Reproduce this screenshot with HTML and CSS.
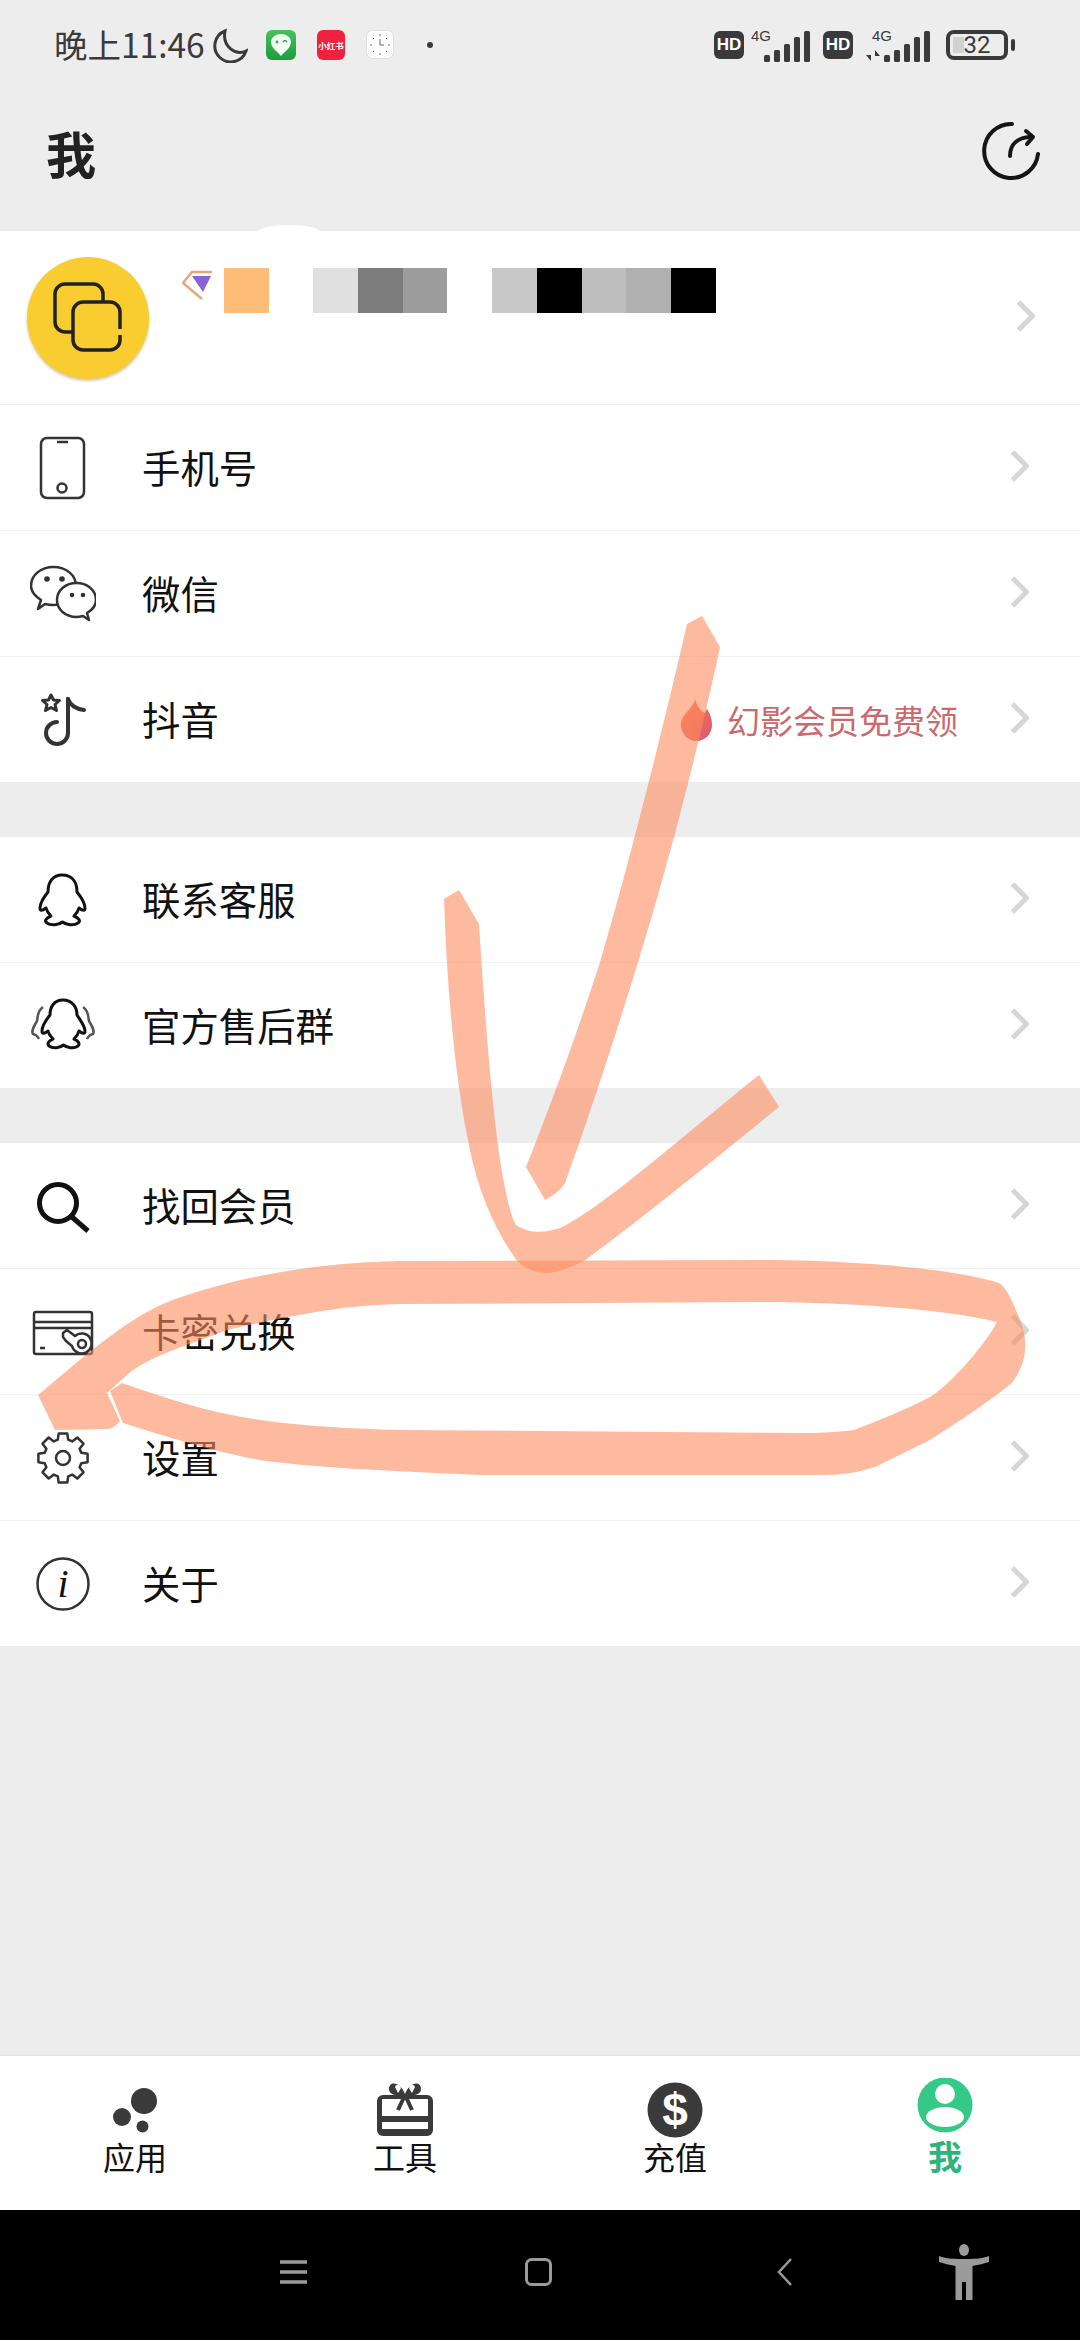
FILE: index.html
```html
<!DOCTYPE html>
<html lang="zh-CN">
<head>
  <meta charset="UTF-8" />
  <title>我</title>
  <link rel="stylesheet" href="styles.css">
</head>
<body>
  <svg class="defs" width="0" height="0">
    <symbol id="chev" viewBox="0 0 19 32"><path d="M2.5 2 L16.5 16 L2.5 30" /></symbol>
    <linearGradient id="flame" x1="0" y1="0" x2="1" y2="1">
      <stop offset="0" stop-color="#ff7a4c" />
      <stop offset="1" stop-color="#d8596f" />
    </linearGradient>
    <linearGradient id="wx" x1="0" y1="0" x2="0" y2="1">
      <stop offset="0" stop-color="#46c15a" />
      <stop offset="1" stop-color="#1f9c3c" />
    </linearGradient>
  </svg>

  <div class="screen">
    <header class="top">
      <div class="statusbar">
        <div class="status-left">
          <span class="time">晚上11:46</span>
          <svg class="moon" width="35" height="35" viewBox="0 0 35 35"><path d="M12 3 A16 16 0 1 0 33 23 C23 28 9 19 12 3Z" /></svg>
          <div class="app-icons">
            <svg width="30" height="30" viewBox="0 0 30 30"><rect width="30" height="30" rx="6" fill="url(#wx)" /><path d="M15 26 C11 21 5 18 5 12 C5 7 10 4 15 4 C20 4 25 7 25 12 C25 18 19 21 15 26Z" fill="#f0fff2" /><circle cx="11" cy="12" r="1.4" fill="#2fa648" /><path d="M17 12 q2 -3 4 0" class="wink" /></svg>
            <svg width="28" height="30" viewBox="0 0 28 30"><rect width="28" height="30" rx="6" fill="#f0213f" /><text x="14" y="18.5" class="xhs">小红书</text></svg>
            <svg class="clock" width="28" height="30" viewBox="0 0 28 30"><rect x="0.5" y="0.5" width="27" height="28" rx="6" fill="#fff" stroke="#ddd" /><path d="M14 4 v2 M14 23 v2 M4 15 h2 M22 15 h2 M7 8 l1 1 M21 8 l-1 1 M7 22 l1 -1 M21 22 l-1 -1" /><path d="M14 9 v6 h4" /></svg>
            <span class="dot"></span>
          </div>
        </div>
        <div class="status-right">
          <span class="hd">HD</span>
          <svg class="signal" width="60" height="33" viewBox="0 0 60 33">
            <text x="0" y="12">4G</text>
            <rect x="13" y="26" width="6" height="7" rx="1.5" /><rect x="23" y="21" width="6" height="12" rx="1.5" /><rect x="33" y="15" width="6" height="18" rx="1.5" /><rect x="43" y="8" width="6" height="25" rx="1.5" /><rect x="53" y="2" width="6" height="31" rx="1.5" />
          </svg>
          <span class="hd">HD</span>
          <svg class="signal" width="66" height="33" viewBox="0 0 66 33">
            <text x="7" y="12">4G</text>
            <path d="M6 21 v11 l-5 -6 h5Z M10 32 v-11 l5 6 h-5Z" />
            <rect x="19" y="26" width="6" height="7" rx="1.5" /><rect x="29" y="21" width="6" height="12" rx="1.5" /><rect x="39" y="15" width="6" height="18" rx="1.5" /><rect x="49" y="8" width="6" height="25" rx="1.5" /><rect x="59" y="2" width="6" height="31" rx="1.5" />
          </svg>
          <span class="battery">32</span>
        </div>
      </div>
      <div class="title-bar">
        <h1>我</h1>
        <svg class="refresh" width="58" height="58" viewBox="0 0 58 58"><path d="M30 2 A27 27 0 1 0 56 32" /><path d="M28 34 C28 22 36 15 50 15" /><path d="M44 9 L51 15 L45 22" /></svg>
      </div>
    </header>

    <section class="group">
      <div class="row user-card">
        <div class="avatar">
          <svg width="122" height="122" viewBox="0 0 122 122"><path d="M76 44 V37 a10 10 0 0 0 -10 -10 H38 a10 10 0 0 0 -10 10 V65 a10 10 0 0 0 10 10 H45" /><path d="M93 72 V55 a10 10 0 0 0 -10 -10 H56 a10 10 0 0 0 -10 10 V83 a10 10 0 0 0 10 10 H83 a10 10 0 0 0 10 -10 V78" /></svg>
        </div>
        <div class="user-name">
          <svg class="gem" width="30" height="30" viewBox="0 0 30 30"><path d="M30 2 H10 L1 13 L20 29" class="gem-edge" /><path d="M10 6 H29 L21 22Z" fill="#8a63d2" /></svg>
          <div class="mosaic">
            <i class="c1"></i><i></i><i class="c2"></i><i class="c3"></i><i class="c4"></i><i></i><i class="c5"></i><i class="c6"></i><i class="c7"></i><i class="c8"></i><i class="c6"></i>
          </div>
        </div>
        <svg class="chevron"><use href="#chev" /></svg>
      </div>

      <div class="row">
        <svg class="icon thin" viewBox="0 0 66 66"><rect x="11" y="3" width="43" height="60" rx="6" /><path d="M27 7 H38" /><circle cx="32" cy="53" r="4.5" /></svg>
        <span class="label">手机号</span>
        <svg class="chevron"><use href="#chev" /></svg>
      </div>
      <div class="row">
        <svg class="icon thin" viewBox="0 0 66 66">
          <path d="M8 48 L11 39 C5 35 1 31 1 25 C1 14 11 6 23.5 6 C36 6 46 14 46 25 C46 36 36 44 23.5 44 C20 44 17 43.5 15 43Z" />
          <path d="M59 59 L57 52 C62 49 66 45 66 39 C66 29 57 22 46.5 22 C36 22 27 29 27 39 C27 49 36 56 46.5 56 C49 56 51 55.5 53 55Z" class="paper" />
          <circle cx="17" cy="18" r="2.8" class="solid" /><circle cx="32" cy="18" r="2.8" class="solid" /><circle cx="42" cy="34" r="2.3" class="solid" /><circle cx="53" cy="34" r="2.3" class="solid" />
        </svg>
        <span class="label">微信</span>
        <svg class="chevron"><use href="#chev" /></svg>
      </div>
      <div class="row">
        <svg class="icon tiktok" viewBox="0 0 66 66"><path d="M38 12 V46 a11 11 0 1 1 -11 -11" /><path d="M38 12 q3 9 16 11" /><path class="star" d="M21 8 l2.5 5 l6 .5 l-4.5 4 l1.5 6 l-5.5 -3 l-5.5 3 l1.5 -6 l-4.5 -4 l6 -.5Z" /></svg>
        <span class="label">抖音</span>
        <div class="promo">
          <svg width="31" height="42" viewBox="0 0 31 42"><path d="M14 0 C16 8 21 13 24 14 C24 12 25 11 26 10 C30 16 31 21 31 26 C31 35 24 42 15.5 42 C7 42 0 35 0 26 C0 15 12 10 14 0Z" fill="url(#flame)" /></svg>
          <span>幻影会员免费领</span>
        </div>
        <svg class="chevron"><use href="#chev" /></svg>
      </div>
    </section>

    <section class="group">
      <div class="row">
        <svg class="icon qq" viewBox="0 0 66 66"><path d="M32 8 C22 8 18 16 18 25 C14 30 10 36 10 41 C10 44 12 44 16 41 C17 45 19 47 21 49 C16 51 14 54 17 56 C21 59 29 58 32.5 55 C36 58 44 59 48 56 C51 54 49 51 44 49 C46 47 48 45 49 41 C53 44 55 44 55 41 C55 36 51 30 47 25 C47 16 43 8 32 8Z" /></svg>
        <span class="label">联系客服</span>
        <svg class="chevron"><use href="#chev" /></svg>
      </div>
      <div class="row">
        <svg class="icon qq" viewBox="0 0 66 66">
          <path d="M33 7 C24 7 20 14 20 22 C16 27 12 33 12 38 C12 41 14 41 18 38 C19 42 21 44 23 46 C18 48 17 51 19 53 C23 56 30 55 33.5 52 C37 55 44 56 48 53 C50 51 49 48 44 46 C46 44 48 42 49 38 C53 41 55 41 55 38 C55 33 50 27 47 22 C47 14 42 7 33 7Z" />
          <path class="side" d="M13 14 C7 18 8 24 7 28 C4 33 1 38 3 41 C6 42 7 42 9 46 M53 14 C59 18 58 24 59 28 C62 33 65 38 63 41 C60 42 59 42 57 46" />
        </svg>
        <span class="label">官方售后群</span>
        <svg class="chevron"><use href="#chev" /></svg>
      </div>
    </section>

    <section class="group">
      <div class="row">
        <svg class="icon search" viewBox="0 0 66 66"><circle cx="28" cy="30" r="18.5" /><path d="M42 44 L58 58" /></svg>
        <span class="label">找回会员</span>
        <svg class="chevron"><use href="#chev" /></svg>
      </div>
      <div class="row">
        <svg class="icon thin" viewBox="0 0 66 66"><rect x="4" y="13" width="58" height="42" rx="2" /><path d="M4 23 H62 M4 29 H62 M10 49 H15" /><path class="paper" d="M33 34 L37 31 L45 37 A10 10 0 1 1 42 47 L36 42 L33 38Z" /><circle cx="52" cy="45" r="4" /></svg>
        <span class="label">卡密兑换</span>
        <svg class="chevron"><use href="#chev" /></svg>
      </div>
      <div class="row">
        <svg class="icon thin" viewBox="0 0 66 66"><path d="M28.7 8.4 L37.3 8.4 L38.2 14.7 L42.2 16.4 L47.3 12.5 L53.5 18.7 L49.6 23.8 L51.3 27.8 L57.6 28.7 L57.6 37.3 L51.3 38.2 L49.6 42.2 L53.5 47.3 L47.3 53.5 L42.2 49.6 L38.2 51.3 L37.3 57.6 L28.7 57.6 L27.8 51.3 L23.8 49.6 L18.7 53.5 L12.5 47.3 L16.4 42.2 L14.7 38.2 L8.4 37.3 L8.4 28.7 L14.7 27.8 L16.4 23.8 L12.5 18.7 L18.7 12.5 L23.8 16.4 L27.8 14.7Z" /><circle cx="33" cy="33" r="7" /></svg>
        <span class="label">设置</span>
        <svg class="chevron"><use href="#chev" /></svg>
      </div>
      <div class="row">
        <svg class="icon thin info" viewBox="0 0 66 66"><circle cx="33" cy="33" r="25.5" /><text x="33" y="46">i</text></svg>
        <span class="label">关于</span>
        <svg class="chevron"><use href="#chev" /></svg>
      </div>
    </section>

    <div class="filler"></div>

    <nav class="tabbar">
      <div class="tab">
        <svg viewBox="0 0 60 60"><circle cx="39" cy="23" r="13" /><circle cx="17" cy="39" r="9" /><circle cx="37.5" cy="48.5" r="6" /></svg>
        <span>应用</span>
      </div>
      <div class="tab">
        <svg viewBox="0 0 60 60"><path d="M30 16 C26 4 14 2 14 11 C14 15 18 17 22 17 H38 C42 17 46 15 46 11 C46 2 34 4 30 16Z" /><rect x="2" y="17" width="56" height="41" rx="6" /><rect class="cut" x="7" y="21" width="46" height="17" /><rect class="cut" x="7" y="44" width="46" height="7" /><path class="cut" d="M20 9 a3 3 0 1 1 5 3 l-2 3 z M40 9 a3 3 0 1 0 -5 3 l2 3 z" /><path class="ribbon" d="M30 17 L23 32 M30 17 L37 32" /></svg>
        <span>工具</span>
      </div>
      <div class="tab">
        <svg viewBox="0 0 60 60"><circle cx="30" cy="32" r="27.5" /><text x="30" y="48" class="dollar">$</text></svg>
        <span>充值</span>
      </div>
      <div class="tab active">
        <svg viewBox="0 0 60 60"><circle cx="30" cy="27" r="27.5" /><circle class="cut" cx="30" cy="16" r="10" /><ellipse class="cut" cx="30" cy="39" rx="19" ry="10" /></svg>
        <span>我</span>
      </div>
    </nav>

    <div class="navbar">
      <svg class="nav-menu" width="27" height="24" viewBox="0 0 27 24"><path d="M0 2 H27 M0 12 H27 M0 22 H27" /></svg>
      <svg class="nav-home" width="27" height="28" viewBox="0 0 27 28"><rect x="1.5" y="1.5" width="24" height="25" rx="5" /></svg>
      <svg class="nav-back" width="15" height="28" viewBox="0 0 15 28"><path d="M14 1 L2 14 L14 27" /></svg>
      <svg class="a11y" width="50" height="56" viewBox="0 0 50 56"><ellipse cx="25" cy="6" rx="5" ry="6" /><path d="M0 12 C8 15 16 15 25 15 C34 15 42 15 50 12 L50 18 C44 20 38 21 33.5 22 V56 H27 V38 H23 V56 H16.5 V22 C12 21 6 20 0 18Z" /></svg>
    </div>

    <!-- hand drawn marks on top of the screenshot -->
    <svg class="scribble" viewBox="0 0 1080 2340">
      <path class="mark" d="M687 624 L702 616 L720 647 C705 720 670 860 639 959 C622 1015 590 1115 565 1183 Q560 1192 545 1200 L526 1167 C545 1120 575 1040 601 959 C630 860 665 720 687 624Z" />
      <path class="mark" d="M444 899 L459 890 L479 924 C484 1000 490 1090 500 1160 C505 1190 510 1215 516 1225 C530 1234 545 1233 560 1228 C600 1210 690 1130 759 1075 L779 1107 C720 1155 640 1220 584 1261 C565 1270 555 1273 546 1273 C530 1272 520 1265 515 1258 C495 1230 478 1190 470 1150 C455 1080 447 990 444 899Z" />
      <path class="mark" d="M38 1395 C80 1360 125 1320 165 1303 C220 1282 300 1263 400 1261 L758 1260 C850 1260 950 1268 999 1283 C1008 1290 1012 1300 1020 1320 C1030 1345 1025 1365 1012 1383 C985 1405 950 1427 930 1440 L875 1467 Q850 1475 826 1475 L482 1475 C410 1472 320 1468 267 1461 C230 1456 170 1438 123 1423 L110 1391 L122 1383 C160 1396 190 1406 217 1412 C280 1426 340 1428 400 1430 L813 1433 Q840 1432 854 1430 C880 1420 905 1410 930 1397 C950 1385 985 1345 997 1322 C950 1310 850 1302 758 1302 L400 1304 C340 1305 280 1318 227 1330 C190 1345 150 1355 127 1375 L107 1393 L120 1421 Q115 1428 107 1429 L55 1430Z" />
    </svg>
  </div>
</body>
</html>
```

FILE: styles.css
```css
* {
  box-sizing: border-box;
}

body {
  margin: 0;
  font-family: "Noto Sans CJK SC", "Noto Sans", sans-serif;
  background: #ededed;
}

.defs {
  position: absolute;
}

.screen {
  position: relative;
  width: 1080px;
  height: 2340px;
  display: flex;
  flex-direction: column;
  overflow: hidden;
}

/* status bar + title */
.top {
  height: 231px;
  background: #ededed;
}

.statusbar {
  height: 75px;
  padding: 15px 66px 0 54px;
  display: flex;
  justify-content: space-between;
  align-items: center;
  color: #3a3a3a;
}

.status-left,
.status-right,
.app-icons {
  display: flex;
  align-items: center;
}

.time {
  margin-top: -2px;
  font-size: 33.5px;
  line-height: 40px;
  white-space: nowrap;
}

.moon {
  margin-left: 8px;
  fill: none;
  stroke: #3a3a3a;
  stroke-width: 3;
}

.app-icons {
  margin-left: 18px;
  gap: 21px;
}

.wink {
  fill: none;
  stroke: #2fa648;
  stroke-width: 1.4;
}

.xhs {
  font-family: "Noto Sans CJK SC", sans-serif;
  font-size: 8.5px;
  font-weight: 700;
  fill: #fff;
  text-anchor: middle;
}

.clock path {
  fill: none;
  stroke: #666;
  stroke-width: 1;
}

.dot {
  width: 6px;
  height: 6px;
  margin-left: 12px;
  border-radius: 50%;
  background: #3a3a3a;
}

.hd {
  width: 30px;
  height: 28px;
  border-radius: 6px;
  background: #3a3a3a;
  color: #fff;
  font-family: "Liberation Sans", sans-serif;
  font-size: 17px;
  font-weight: 700;
  line-height: 28px;
  text-align: center;
}

.status-right .hd + .signal {
  margin-left: 7px;
  margin-right: 12px;
}

.status-right .signal:last-of-type {
  margin-left: 12px;
  margin-right: 15px;
}

.signal {
  overflow: visible;
  fill: #3a3a3a;
}

.signal text {
  font-family: "Liberation Sans", sans-serif;
  font-size: 15px;
}

.battery {
  position: relative;
  z-index: 0;
  width: 62px;
  height: 30px;
  margin-right: 6px;
  border: 4px solid #3a3a3a;
  border-radius: 8px;
  font-family: "Roboto", sans-serif;
  font-size: 24px;
  line-height: 23px;
  text-align: center;
}

.battery::before {
  content: "";
  position: absolute;
  left: 3px;
  top: 3px;
  bottom: 3px;
  width: 11px;
  background: #d2d2d2;
  z-index: -1;
}

.battery::after {
  content: "";
  position: absolute;
  right: -11px;
  top: 5px;
  width: 4px;
  height: 12px;
  border-radius: 2px;
  background: #3a3a3a;
}

.title-bar {
  height: 156px;
  padding: 0 40px 0 46px;
  display: flex;
  justify-content: space-between;
  align-items: center;
}

h1 {
  margin: -3px 0 0;
  font-size: 50px;
  font-weight: 700;
  color: #222;
}

.refresh {
  margin-top: -4px;
  fill: none;
  stroke: #151515;
  stroke-width: 4;
  stroke-linecap: round;
  stroke-linejoin: round;
}

/* list */
.group {
  background: #fff;
}

.group + .group {
  margin-top: 55px;
}

.row {
  height: 126px;
  padding: 0 51px 0 30px;
  display: flex;
  align-items: center;
  border-bottom: 1px solid #f0f0f0;
}

.row:last-child {
  height: 125px;
  border-bottom: 0;
}

.user-card {
  position: relative;
  height: 174px;
  padding: 0 45px 0 27px;
}

.user-card::before {
  content: "";
  position: absolute;
  left: 258px;
  top: -6px;
  width: 62px;
  height: 14px;
  border-radius: 50%;
  background: #fff;
}

.avatar {
  width: 122px;
  height: 122px;
  border-radius: 50%;
  background: #f9cd2f;
  box-shadow: 0 2px 3px rgba(120, 90, 0, 0.35);
}

.avatar svg {
  display: block;
  fill: none;
  stroke: #222;
  stroke-width: 3.5;
}

.user-name {
  flex: 1;
  align-self: flex-start;
  margin: 37px 0 0 33px;
  display: flex;
  gap: 12px;
}

.gem {
  margin-top: 2px;
}

.gem-edge {
  fill: none;
  stroke: #e5a878;
  stroke-width: 2.5;
}

.mosaic {
  display: grid;
  grid-template-columns: repeat(11, 44.7px);
  height: 45px;
}

.c1 { background: #fdbd78; }
.c2 { background: #e0e0e0; }
.c3 { background: #7c7c7c; }
.c4 { background: #9c9c9c; }
.c5 { background: #c8c8c8; }
.c6 { background: #000; }
.c7 { background: #bebebe; }
.c8 { background: #b0b0b0; }

.chevron {
  width: 19px;
  height: 32px;
  margin-top: -3px;
  flex: none;
  fill: none;
  stroke: #d6d6d6;
  stroke-width: 5;
}

.icon {
  width: 66px;
  height: 66px;
  flex: none;
  fill: none;
}

.thin {
  stroke: #333;
  stroke-width: 2.5;
  stroke-linejoin: round;
}

.thin .solid {
  fill: #333;
  stroke: none;
}

.paper {
  fill: #fff;
}

.tiktok {
  stroke: #333;
  stroke-width: 4;
  stroke-linecap: round;
}

.tiktok .star {
  stroke-width: 3;
  stroke-linejoin: round;
}

.qq {
  stroke: #111;
  stroke-width: 3;
  stroke-linejoin: round;
}

.qq .side {
  stroke: #555;
  stroke-width: 2.5;
}

.search {
  stroke: #111;
  stroke-width: 5;
}

.info text {
  font-family: "Liberation Serif", serif;
  font-size: 40px;
  font-style: italic;
  fill: #111;
  stroke: none;
  text-anchor: middle;
}

.label {
  flex: 1;
  margin: -3px 0 0 46px;
  font-size: 38.4px;
  color: #111;
  white-space: nowrap;
}

.promo {
  display: flex;
  align-items: center;
  gap: 15px;
  margin-right: 52px;
  font-size: 33px;
  color: #c96a6c;
  white-space: nowrap;
}

.filler {
  flex: 1;
  background: #ededed;
}

/* bottom tabs */
.tabbar {
  height: 154px;
  padding-top: 22px;
  display: grid;
  grid-template-columns: repeat(4, 270px);
  background: #fff;
  box-shadow: 0 -1px 2px rgba(0, 0, 0, 0.06);
}

.tab {
  display: flex;
  flex-direction: column;
  align-items: center;
  font-size: 32px;
  line-height: 36px;
  color: #111;
}

.tab svg {
  width: 60px;
  height: 60px;
  fill: #3a3a3a;
}

.tab .cut {
  fill: #fff;
}

.tab .ribbon {
  fill: none;
  stroke: #3a3a3a;
  stroke-width: 4;
}

.tab .dollar {
  font-family: "Liberation Sans", sans-serif;
  font-size: 46px;
  font-weight: 700;
  fill: #fff;
  text-anchor: middle;
}

.tab.active {
  color: #2fb37a;
  font-size: 34px;
  font-weight: 700;
}

.tab.active svg {
  fill: #34c987;
}

/* system navigation */
.navbar {
  position: relative;
  height: 130px;
  padding-left: 280px;
  display: flex;
  align-items: flex-start;
  background: #000;
}

.navbar svg {
  fill: none;
  stroke: #9a9a9a;
}

.nav-menu {
  margin-top: 50px;
  stroke-width: 3.5;
}

.nav-home {
  margin: 48px 0 0 218px;
  stroke-width: 3;
}

.nav-back {
  margin: 48px 0 0 225px;
  stroke-width: 2.5;
}

.navbar .a11y {
  position: absolute;
  left: 939px;
  top: 34px;
  fill: #9a9a9a;
  stroke: none;
}

/* overlay drawn by hand on the picture */
.scribble {
  position: absolute;
  left: 0;
  top: 0;
  width: 1080px;
  height: 2340px;
  pointer-events: none;
}

.mark {
  fill: #fc8c5f;
  opacity: 0.6;
}
```
